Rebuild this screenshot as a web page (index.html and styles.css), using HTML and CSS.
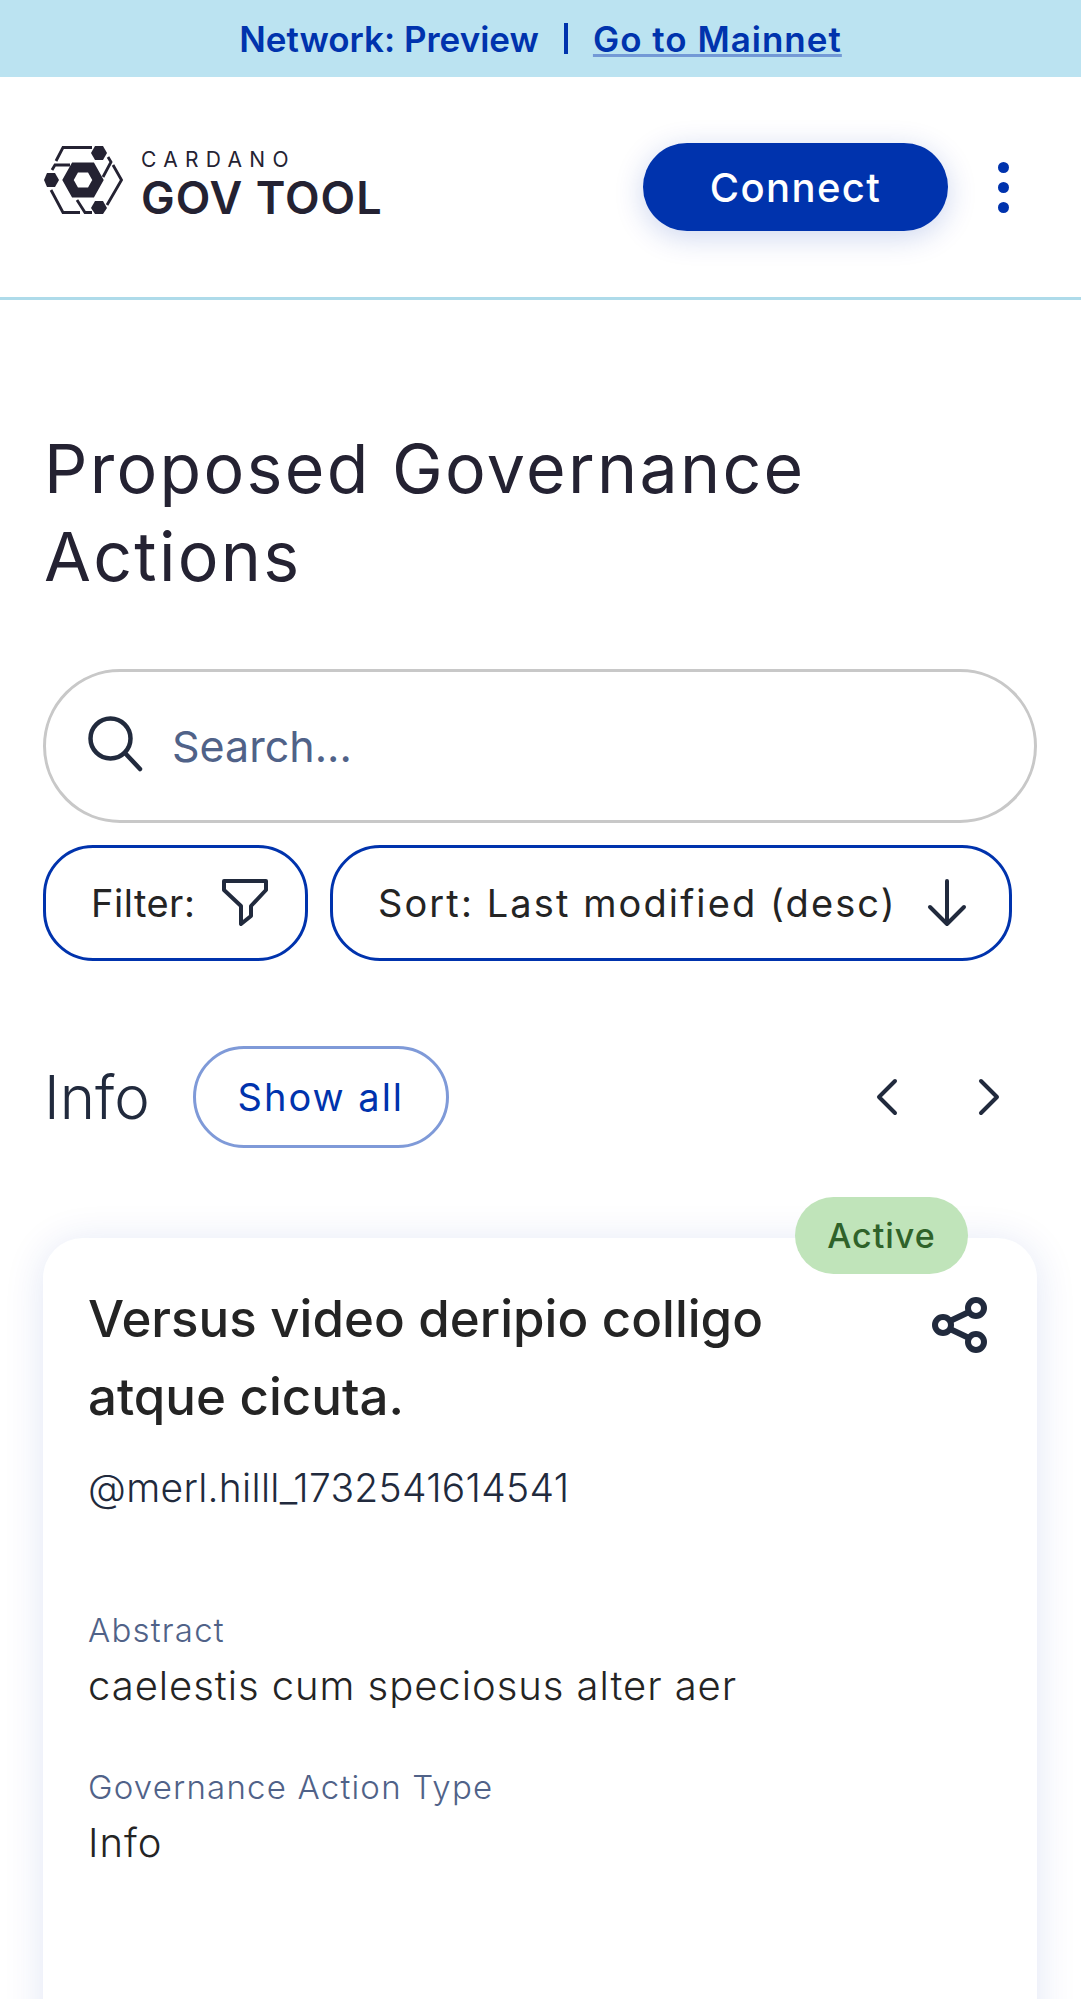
FILE: index.html
```html
<!DOCTYPE html>
<html lang="en">
<head>
  <meta charset="UTF-8" />
  <meta name="viewport" content="width=device-width, initial-scale=1.0"/>
  <title>Cardano Gov Tool</title>
  <link rel="stylesheet" href="styles.css">
</head>
<body>
  <div class="network-bar">
    <span>Network: Preview</span>
    <span class="network-sep"></span>
    <a href="#" class="network-link">Go to Mainnet</a>
  </div>

  <header class="top-bar">
    <a href="#" class="logo">
      <svg class="logo-mark" viewBox="0 0 79 68" fill="none" stroke="#242232" stroke-width="2.8">
        <path d="M12 15 L19 1.5 H48" />
        <path d="M8 24 L11 19 H26" />
        <path d="M64 11 L67 16 L59 31" />
        <path d="M69 19 L77.5 34 L63 59" />
        <path d="M7 44 L19 66.5 H36" />
        <path d="M33 54 L41 66.5 H48" />
        <polygon points="51,0 59,0 63,7 59,14 51,14 47,7" fill="#242232" stroke="none"/>
        <polygon points="3,27 11,27 15,34 11,41 3,41 0,34" fill="#242232" stroke="none"/>
        <polygon points="51,55 59,55 63,62 59,68 51,68 47,62" fill="#242232" stroke="none"/>
        <polygon points="31,21.500 47,21.500 54,34 47,46.500 31,46.500 24,34" stroke-width="10"/>
      </svg>
      <span class="logo-text">
        <span class="logo-small">CARDANO</span>
        <span class="logo-big">GOV TOOL</span>
      </span>
    </a>
    <div class="top-actions">
      <button class="connect-btn">Connect</button>
      <button class="more-btn" aria-label="Menu"><i></i><i></i><i></i></button>
    </div>
  </header>

  <main class="content">
    <h1>Proposed Governance Actions</h1>

    <div class="search-box">
      <svg class="icon" width="60" height="60" viewBox="0 0 60 60" fill="none" stroke="#212a3d" stroke-width="4.5" stroke-linecap="round">
        <circle cx="22.500" cy="22.500" r="20"/>
        <path d="M37 37 L52 53"/>
      </svg>
      <span class="placeholder">Search...</span>
    </div>

    <div class="controls">
      <button class="control-btn filter-btn">
        Filter:
        <svg width="50" height="50" viewBox="0 0 50 50" fill="none" stroke="#212a3d" stroke-width="4" stroke-linejoin="round" stroke-linecap="round">
          <path d="M4 3 H46 V12 L31 28 V38 L21 46 V28 L4 12 Z"/>
        </svg>
      </button>
      <button class="control-btn sort-btn">
        Sort: Last modified (desc)
        <svg width="44" height="50" viewBox="0 0 44 50" fill="none" stroke="#212a3d" stroke-width="4" stroke-linejoin="round" stroke-linecap="round">
          <path d="M22 3 V46 M5 29 L22 46 L39 29"/>
        </svg>
      </button>
    </div>

    <section class="section-head">
      <div class="section-left">
        <h2>Info</h2>
        <button class="show-all">Show all</button>
      </div>
      <div class="pager">
        <svg width="30" height="44" viewBox="0 0 30 44" fill="none" stroke="#212a3d" stroke-width="4" stroke-linecap="round" stroke-linejoin="round"><path d="M23 6 L7 22 L23 38"/></svg>
        <svg width="30" height="44" viewBox="0 0 30 44" fill="none" stroke="#212a3d" stroke-width="4" stroke-linecap="round" stroke-linejoin="round"><path d="M7 6 L23 22 L7 38"/></svg>
      </div>
    </section>

    <article class="card">
      <span class="status">Active</span>
      <div class="card-head">
        <h3>Versus video deripio colligo atque cicuta.</h3>
        <svg width="56" height="56" viewBox="0 0 56 56" fill="none" stroke="#212a3d" stroke-width="6">
          <circle cx="44" cy="11" r="8"/>
          <circle cx="11" cy="28" r="8"/>
          <circle cx="44" cy="45" r="8"/>
          <path d="M18 24 L37 15 M18 32 L37 41"/>
        </svg>
      </div>
      <p class="handle">@merl.hilll_1732541614541</p>
      <div class="field">
        <div class="field-label">Abstract</div>
        <div class="field-value">caelestis cum speciosus alter aer</div>
      </div>
      <div class="field">
        <div class="field-label">Governance Action Type</div>
        <div class="field-value">Info</div>
      </div>
    </article>
  </main>
</body>
</html>
```

FILE: styles.css
```css
* {
  box-sizing: border-box;
}

html, body {
  margin: 0;
  height: 1999px;
  overflow: hidden;
}

body {
  font-family: Inter, 'Open Sans', sans-serif;
  background: #fff;
  color: #212a3d;
}

button {
  font-family: inherit;
  background: none;
  border: none;
  padding: 0;
}

.network-bar {
  height: 77px;
  background: #bbe3f1;
  color: #0033ad;
  display: flex;
  align-items: center;
  justify-content: center;
  font-size: 35px;
  font-weight: 600;
}

.network-sep {
  width: 4px;
  height: 31px;
  margin: 0 25px;
  background: #0033ad;
}

.network-link {
  color: #0033ad;
  letter-spacing: 1px;
  text-decoration: underline;
  text-decoration-color: #7399d6;
}

.top-bar {
  height: 223px;
  border-bottom: 3px solid #aedbea;
  display: flex;
  align-items: center;
  justify-content: space-between;
  padding: 0 43px 0 44px;
}

.logo {
  display: flex;
  align-items: center;
  gap: 18px;
  margin-bottom: 14px;
  text-decoration: none;
  color: #242232;
}

.logo-mark {
  width: 79px;
  height: 68px;
}

.logo-text {
  display: flex;
  flex-direction: column;
  margin-top: 10px;
}

.logo-small {
  font-size: 21px;
  line-height: 26px;
  letter-spacing: 7.3px;
}

.logo-big {
  font-size: 45px;
  line-height: 50px;
  font-weight: 600;
  letter-spacing: 1px;
}

.top-actions {
  display: flex;
  align-items: center;
  gap: 50px;
  margin-right: 29px;
}

.connect-btn {
  width: 305px;
  height: 88px;
  border-radius: 44px;
  background: #0033ad;
  color: #fff;
  font-size: 40px;
  font-weight: 450;
  letter-spacing: 1.4px;
  box-shadow: 0 6px 30px rgba(0, 51, 173, 0.2);
}

.more-btn {
  display: flex;
  flex-direction: column;
  gap: 9px;
  width: 11px;
}

.more-btn i {
  width: 11px;
  height: 11px;
  border-radius: 50%;
  background: #0033ad;
}

.content {
  padding: 124px 44px 0 44px;
}

h1 {
  margin: 0;
  max-width: 800px;
  font-size: 68px;
  line-height: 88px;
  font-weight: 400;
  letter-spacing: 2.3px;
  color: #242232;
}

.search-box {
  margin-top: 69px;
  margin-left: -1px;
  height: 154px;
  border: 3px solid #c8c8c8;
  border-radius: 77px;
  display: flex;
  align-items: center;
  gap: 24px;
  padding: 0 42px;
}

.placeholder {
  font-size: 43px;
  color: #506288;
}

.controls {
  display: flex;
  gap: 22px;
  margin-top: 22px;
  margin-left: -1px;
}

.control-btn {
  height: 116px;
  border: 3px solid #0033ad;
  border-radius: 50px;
  display: flex;
  align-items: center;
  justify-content: space-between;
  font-size: 38px;
  font-weight: 400;
  color: #242424;
  padding: 0 40px 0 45px;
}

.filter-btn {
  width: 265px;
  padding-right: 35px;
  letter-spacing: 0.5px;
}

.sort-btn {
  width: 682px;
  letter-spacing: 2.1px;
}

.section-head {
  margin-top: 85px;
  display: flex;
  align-items: center;
  justify-content: space-between;
}

.section-left {
  display: flex;
  align-items: center;
  gap: 43px;
}

h2 {
  margin: 0;
  font-size: 60px;
  font-weight: 300;
}

.show-all {
  width: 256px;
  height: 102px;
  border: 3px solid #7f9ad8;
  border-radius: 51px;
  color: #0033ad;
  font-size: 38px;
  font-weight: 400;
  letter-spacing: 2px;
}

.pager {
  display: flex;
  gap: 72px;
  margin-right: 33px;
}

.card {
  position: relative;
  margin: 90px 0 0 -1px;
  height: 900px;
  border-radius: 40px;
  background: #fff;
  box-shadow: 0 4px 40px rgba(0, 51, 173, 0.12);
  padding: 42px 49px 40px 45px;
}

.status {
  position: absolute;
  top: -41px;
  right: 69px;
  width: 173px;
  height: 77px;
  border-radius: 39px;
  background: #c0e4ba;
  color: #2f622a;
  font-size: 34px;
  font-weight: 450;
  letter-spacing: 1px;
  display: flex;
  align-items: center;
  justify-content: center;
}

.card-head {
  display: flex;
  justify-content: space-between;
  align-items: flex-start;
}

.card-head svg {
  margin-top: 17px;
}

h3 {
  margin: 0;
  width: 720px;
  font-size: 51px;
  line-height: 78px;
  font-weight: 500;
  color: #242424;
}

.handle {
  margin: 22px 0 0;
  font-size: 39px;
  line-height: 60px;
  font-weight: 350;
  letter-spacing: 0.3px;
  color: #212a3d;
}

.field {
  margin-top: 45px;
}

.handle + .field {
  margin-top: 86px;
}

.field-label {
  font-size: 33px;
  line-height: 52px;
  letter-spacing: 1.2px;
  font-weight: 350;
  color: #506288;
}

.field-value {
  font-size: 40px;
  line-height: 60px;
  letter-spacing: 0.95px;
  font-weight: 350;
  color: #242424;
}
```
